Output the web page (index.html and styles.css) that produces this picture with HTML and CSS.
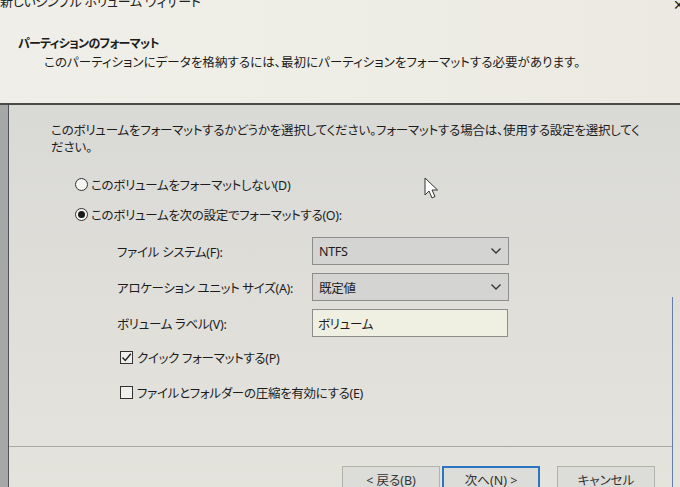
FILE: index.html
```html
<!DOCTYPE html>
<html lang="ja">
<head>
<meta charset="utf-8">
<link rel="stylesheet" href="styles.css">
</head>
<body>
<div class="window">
  <div class="header">
    <div class="titlebar">
      <span class="title">新しいシンプル ボリューム ウィザード</span>
      <span class="close">✕</span>
    </div>
    <div class="header-main">
      <div class="h1">パーティションのフォーマット</div>
      <div class="sub">このパーティションにデータを格納するには、最初にパーティションをフォーマットする必要があります。</div>
    </div>
  </div>
  <div class="sep"></div>
  <div class="body">
    <div class="left-strip"></div>
    <div class="content">
      <div class="main">
        <p class="intro">このボリュームをフォーマットするかどうかを選択してください。フォーマットする場合は、使用する設定を選択してください。</p>
        <div class="radios">
          <div class="radio-row"><span class="radio"></span><span>このボリュームをフォーマットしない(D)</span></div>
          <div class="radio-row"><span class="radio on"></span><span>このボリュームを次の設定でフォーマットする(O):</span></div>
        </div>
        <div class="form">
          <div class="frow"><span class="flabel">ファイル システム(F):</span><div class="select"><span>NTFS</span><svg width="12" height="8" viewBox="0 0 12 8"><path d="M1.5 1.5 L6 6 L10.5 1.5" fill="none" stroke="#333" stroke-width="1.3"/></svg></div></div>
          <div class="frow"><span class="flabel">アロケーション ユニット サイズ(A):</span><div class="select"><span>既定値</span><svg width="12" height="8" viewBox="0 0 12 8"><path d="M1.5 1.5 L6 6 L10.5 1.5" fill="none" stroke="#333" stroke-width="1.3"/></svg></div></div>
          <div class="frow"><span class="flabel">ボリューム ラベル(V):</span><div class="input">ボリューム</div></div>
        </div>
        <div class="checks">
          <div class="check-row"><span class="check"><svg width="11" height="11" viewBox="0 0 11 11"><path d="M1.5 5.5 L4.3 8.5 L9.8 1.8" fill="none" stroke="#222" stroke-width="1.4"/></svg></span><span>クイック フォーマットする(P)</span></div>
          <div class="check-row"><span class="check"></span><span>ファイルとフォルダーの圧縮を有効にする(E)</span></div>
        </div>
        <svg class="cursor" width="16" height="24" viewBox="0 0 16 24"><path d="M1 1 L1 18 L5 14 L8 21 L11 19.5 L8 13 L13.5 13 Z" fill="#fff" stroke="#333" stroke-width="1"/></svg>
      </div>
      <div class="bsep"></div>
      <div class="buttons">
        <div class="btn">&lt; 戻る(B)</div>
        <div class="btn primary">次へ(N) &gt;</div>
        <div class="btn cancel">キャンセル</div>
      </div>
    </div>
    <div class="right-edge"><div class="edge-line"></div></div>
  </div>
</div>
</body>
</html>
```
FILE: styles.css
```css
* { box-sizing: border-box; }
html, body { margin: 0; padding: 0; }
body {
  width: 680px; height: 487px; overflow: hidden;
  font-family: "Noto Sans", "Noto Sans CJK JP", sans-serif;
  font-feature-settings: "palt";
  color: #1c1c1c;
  background: #dedcd6;
}
.window { display: flex; flex-direction: column; height: 487px; }
.header { height: 103px; background: linear-gradient(90deg, #efeee8, #eeede5 60%, #ebe9e1); }
.titlebar { height: 11px; overflow: hidden; display: flex; justify-content: space-between; }
.title { font-size: 13px; line-height: 13px; margin-top: -5px; color: #222; letter-spacing: -0.3px; }
.close { font-size: 14px; line-height: 14px; margin-top: -2px; margin-right: -5px; color: #222; }
.header-main { padding: 24px 0 0 18px; }
.h1 { font-size: 12px; font-weight: bold; line-height: 17px; letter-spacing: -0.7px; }
.sub { font-size: 12.5px; line-height: 17px; padding-left: 26px; margin-top: 2px; letter-spacing: 0.05px; }
.sep { height: 2px; background: #4a4a48; }
.body { flex: 1; display: flex; background: linear-gradient(180deg, #d9d9d6 0%, #dfded9 50%, #e4e3dc 100%); }
.left-strip { width: 9px; background: #a6a8a8; border-right: 1px solid #4f5257; }
.content { flex: 1; display: flex; flex-direction: column; }
.main { position: relative; flex: 1; padding: 17px 0 0 42px; font-size: 12.5px; letter-spacing: -0.3px; }
.intro { margin: 0; line-height: 17px; width: 601px; letter-spacing: -0.2px; }
.radios { margin-top: 20px; padding-left: 24px; display: flex; flex-direction: column; gap: 13px; }
.radio-row { display: flex; align-items: center; gap: 3px; height: 17px; }
.radio { width: 13px; height: 13px; border-radius: 50%; border: 1px solid #333; background: #f4f4f2; display: inline-flex; align-items: center; justify-content: center; }
.radio.on::after { content: ""; width: 7px; height: 7px; border-radius: 50%; background: #1a1a1a; }
.form { margin-top: 14px; padding-left: 66px; display: flex; flex-direction: column; gap: 8px; }
.frow { display: flex; align-items: center; height: 28px; }
.flabel { width: 195px; white-space: nowrap; }
.select { width: 197px; height: 28px; border: 1px solid #8d8d8c; background: #d4d4d2; display: flex; align-items: center; justify-content: space-between; padding: 0 6px 0 6px; }
.input { width: 196px; height: 28px; border: 1px solid #8d8d8c; background: #efefe2; display: flex; align-items: center; padding-left: 5px; }
.checks { margin-top: 12px; padding-left: 69px; display: flex; flex-direction: column; gap: 18px; }
.check-row { display: flex; align-items: center; gap: 4px; height: 17px; }
.check { width: 13px; height: 13px; border: 1px solid #333; background: #efefec; display: inline-flex; align-items: center; justify-content: center; }
.cursor { position: absolute; left: 415px; top: 72px; }
.bsep { height: 1px; background: #a9a9a4; }
.buttons { height: 40px; display: flex; padding: 19px 0 0 333px; gap: 2px; }
.btn { width: 98px; height: 26px; border: 1px solid #b1b1ae; background: #dcdcd8; font-size: 12.5px; display: flex; justify-content: center; align-items: center; color: #333; }
.btn.primary { border: 2px solid #2d74c4; }
.btn.cancel { margin-left: 15px; }
.right-edge { width: 8px; display: flex; flex-direction: column; justify-content: flex-end; }
.edge-line { height: 190px; border-left: 1px solid #5f7fae; }
```
